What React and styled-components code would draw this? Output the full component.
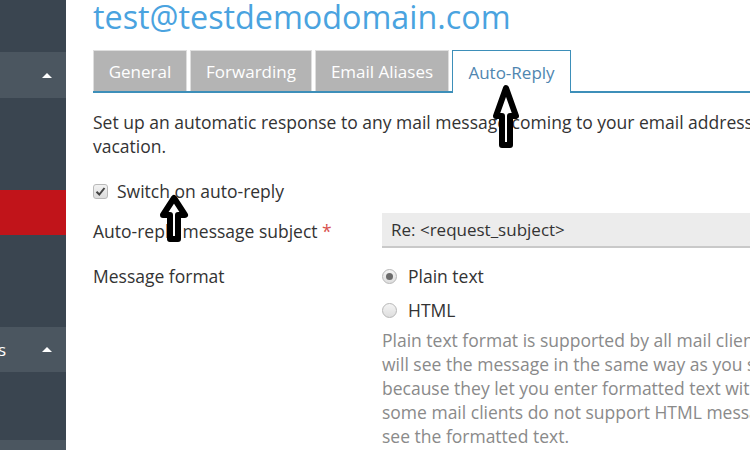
import React from 'react';
import styled, { createGlobalStyle } from 'styled-components';

const GlobalStyle = createGlobalStyle`
  html, body {
    margin: 0;
    padding: 0;
    overflow: hidden;
    background: #fff;
  }
  body {
    font-family: "Open Sans", "Liberation Sans", sans-serif;
    color: #333;
  }
`;

const Page = styled.div`
  position: relative;
  display: flex;
  width: 750px;
  height: 450px;
  overflow: hidden;
`;

const Sidebar = styled.nav`
  flex: 0 0 66px;
  display: flex;
  flex-direction: column;
  overflow: hidden;
`;

const NavBlock = styled.div`
  flex: 0 0 ${props => props.h}px;
  background: ${props =>
    props.kind === 'group' ? '#4b5660' : props.kind === 'active' ? '#c1141a' : '#3a4550'};
  display: flex;
  align-items: center;
  justify-content: space-between;
  padding-right: 14px;
`;

const NavLabel = styled.div`
  flex: 0 0 6px;
  display: flex;
  justify-content: flex-end;
  overflow: hidden;
  white-space: nowrap;
  color: #fff;
  font-size: 17px;
`;

const Caret = styled.span`
  width: 0;
  height: 0;
  border-left: 5px solid transparent;
  border-right: 5px solid transparent;
  border-bottom: 5px solid #fff;
`;

const Main = styled.main`
  flex: 1;
  min-width: 0;
  padding-left: 27px;
  overflow: hidden;
`;

const Title = styled.h1`
  margin: 0;
  height: 50px;
  font-size: 32.3px;
  font-weight: 400;
  line-height: 32px;
  color: #4aa3df;
  white-space: nowrap;
`;

const TabBar = styled.div`
  display: flex;
  gap: 3px;
  height: 41px;
  border-bottom: 2px solid #3d8fb9;
`;

const Tab = styled.div`
  box-sizing: border-box;
  flex: 0 0 ${props => props.w}px;
  height: ${props => (props.active ? '43px' : '41px')};
  display: flex;
  align-items: center;
  justify-content: center;
  font-size: 17px;
  white-space: nowrap;
  background: ${props => (props.active ? '#fff' : '#b4b4b4')};
  color: ${props => (props.active ? '#4f86b0' : '#fff')};
  border: 1px solid ${props => (props.active ? '#3d8fb9' : '#dedede')};
  border-bottom: none;
`;

const Description = styled.p`
  margin: 17px 0 0;
  font-size: 17.5px;
  line-height: 24px;
  white-space: nowrap;
`;

const CheckRow = styled.label`
  display: flex;
  align-items: center;
  gap: 9px;
  margin-top: 21px;
  height: 24px;
  font-size: 17.5px;
`;

const CheckBox = styled.span`
  box-sizing: border-box;
  width: 15px;
  height: 15px;
  border: 1px solid #b9b9b9;
  border-radius: 3px;
  background: linear-gradient(#f2f2f2, #dcdcdc);
  display: flex;
  align-items: center;
  justify-content: center;
`;

const Form = styled.div`
  display: grid;
  grid-template-columns: 289px 1fr;
  margin-top: 10px;
  align-items: start;
`;

const FieldLabel = styled.div`
  font-size: 17.5px;
  line-height: 24px;
  padding-top: ${props => props.top}px;
  white-space: nowrap;
`;

const Required = styled.span`
  color: #d9534f;
`;

const TextInput = styled.div`
  box-sizing: border-box;
  height: 35px;
  background: #ececec;
  border-bottom: 2px solid #c9c9c9;
  padding-left: 9px;
  display: flex;
  align-items: center;
  font-size: 17px;
  color: #333;
  white-space: nowrap;
`;

const Options = styled.div`
  padding-top: 16px;
  display: flex;
  flex-direction: column;
`;

const RadioRow = styled.label`
  display: flex;
  align-items: center;
  gap: 11px;
  height: 24px;
  margin-bottom: ${props => props.gap}px;
  font-size: 17.5px;
`;

const Radio = styled.span`
  box-sizing: border-box;
  width: 15px;
  height: 15px;
  border-radius: 50%;
  border: 1px solid #b7b7b7;
  background: linear-gradient(#f4f4f4, #dedede);
  display: flex;
  align-items: center;
  justify-content: center;
  &::after {
    content: '';
    width: 7px;
    height: 7px;
    border-radius: 50%;
    background: ${props => (props.checked ? '#6b6b6b' : 'transparent')};
  }
`;

const Help = styled.div`
  font-size: 17.5px;
  line-height: 24px;
  color: #8a8a8a;
  white-space: nowrap;
`;

const Arrow = styled.svg`
  position: absolute;
  left: ${props => props.x}px;
  top: ${props => props.y}px;
`;

const UpArrow = ({ x, y, w, h, head }) => (
  <Arrow x={x} y={y} width={w} height={h} viewBox={`0 0 ${w} ${h}`}>
    <path
      d={`M${w / 2} 4 L${w - 4} ${head} L${w / 2 + 4} ${head} L${w / 2 + 4} ${h - 4} L${w / 2 - 4} ${h - 4} L${w / 2 - 4} ${head} L4 ${head} Z`}
      fill="#fff"
      stroke="#000"
      strokeWidth="6"
      strokeLinejoin="round"
    />
  </Arrow>
);

const navBlocks = [
  { h: 52 },
  { h: 46, kind: 'group', caret: true },
  { h: 92 },
  { h: 45, kind: 'active' },
  { h: 92 },
  { h: 45, kind: 'group', caret: true, label: 'Mail Services' },
  { h: 68 },
  { h: 10, kind: 'group' },
];

const tabs = [
  { name: 'General', w: 94 },
  { name: 'Forwarding', w: 122 },
  { name: 'Email Aliases', w: 134 },
  { name: 'Auto-Reply', w: 119, active: true },
];

export default function App() {
  return (
    <>
      <GlobalStyle />
      <Page>
        <Sidebar>
          {navBlocks.map((b, i) => (
            <NavBlock key={i} h={b.h} kind={b.kind}>
              <NavLabel>{b.label}</NavLabel>
              {b.caret && <Caret />}
            </NavBlock>
          ))}
        </Sidebar>

        <Main>
          <Title>test@testdemodomain.com</Title>

          <TabBar>
            {tabs.map(t => (
              <Tab key={t.name} active={t.active} w={t.w}>
                {t.name}
              </Tab>
            ))}
          </TabBar>

          <Description>
            Set up an automatic response to any mail message coming to your email address while you are on
            <br />
            vacation.
          </Description>

          <CheckRow>
            <CheckBox>
              <svg width="11" height="11" viewBox="0 0 11 11">
                <path d="M1.5 5.8 L4.3 8.5 L9.5 2" fill="none" stroke="#444" strokeWidth="2" />
              </svg>
            </CheckBox>
            Switch on auto-reply
          </CheckRow>

          <Form>
            <FieldLabel top={6}>
              Auto-reply message subject <Required>*</Required>
            </FieldLabel>
            <TextInput>Re: &lt;request_subject&gt;</TextInput>

            <FieldLabel top={16}>Message format</FieldLabel>
            <Options>
              <RadioRow gap={10}>
                <Radio checked />
                Plain text
              </RadioRow>
              <RadioRow gap={6}>
                <Radio />
                HTML
              </RadioRow>
              <Help>
                Plain text format is supported by all mail clients, and the recipients
                <br />
                will see the message in the same way as you see it now. HTML is better,
                <br />
                because they let you enter formatted text with images and links. However,
                <br />
                some mail clients do not support HTML messages, and the recipients will not
                <br />
                see the formatted text.
              </Help>
            </Options>
          </Form>
        </Main>

        <UpArrow x={159} y={194} w={30} h={49} head={21} />
        <UpArrow x={492} y={84} w={28} h={65} head={32} />
      </Page>
    </>
  );
}
